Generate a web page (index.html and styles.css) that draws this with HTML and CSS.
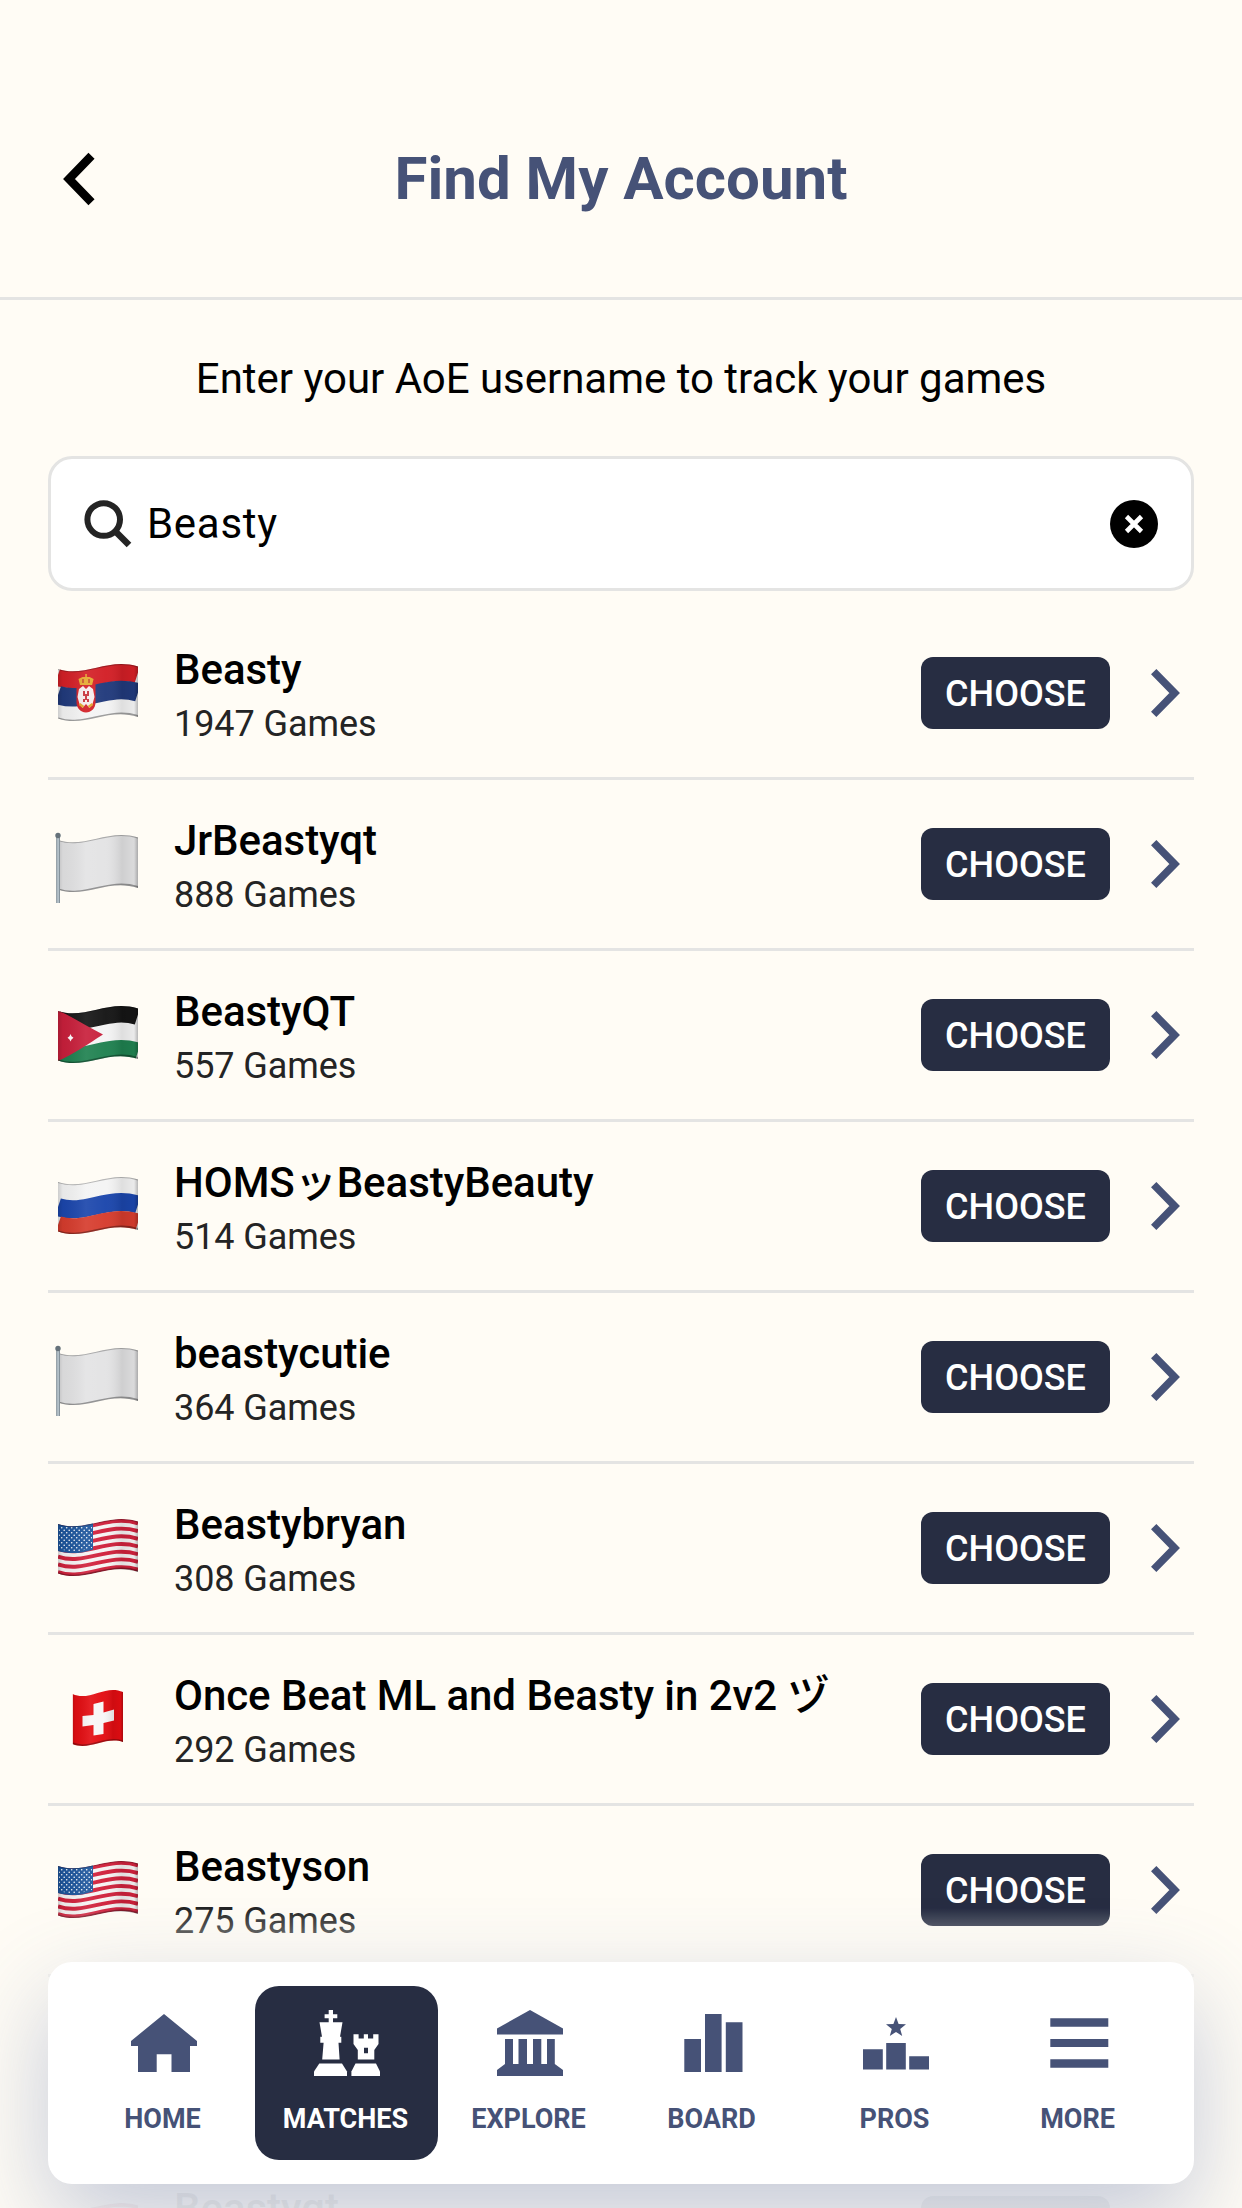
FILE: index.html
```html
<!DOCTYPE html>
<html lang="en">
<head>
  <meta charset="UTF-8" />
  <meta name="viewport" content="width=device-width, initial-scale=1.0"/>
  <title>Find My Account</title>
  <link rel="stylesheet" href="styles.css">
</head>
<body>

  <!-- Shared icons and flags -->
  <svg class="sprite" width="0" height="0">
    <defs>
      <path id="wave" d="M0 5 C27 14 50 -7 80 2.5" fill="none" />
      <clipPath id="flag-clip">
        <path d="M0 5 C27 14 50 -7 80 2.5 V53 C50 43 27 64 0 54.5 Z" />
      </clipPath>
      <clipPath id="swiss-clip">
        <path d="M0 4 C17 12 33 -6 50.5 2 V52 C33 46 17 61 0 54 Z" />
      </clipPath>
      <linearGradient id="folds">
        <stop offset="0" stop-color="#000" stop-opacity="0.16" />
        <stop offset="0.06" stop-color="#000" stop-opacity="0.05" />
        <stop offset="0.35" stop-color="#fff" stop-opacity="0.08" />
        <stop offset="0.6" stop-color="#fff" stop-opacity="0.03" />
        <stop offset="0.8" stop-color="#000" stop-opacity="0.09" />
        <stop offset="0.95" stop-color="#000" stop-opacity="0.04" />
        <stop offset="1" stop-color="#000" stop-opacity="0.25" />
      </linearGradient>
      <linearGradient id="pole">
        <stop offset="0" stop-color="#72808a" />
        <stop offset="0.5" stop-color="#c5d2da" />
        <stop offset="1" stop-color="#6d7a84" />
      </linearGradient>
      <pattern id="stars" width="5" height="5" patternUnits="userSpaceOnUse">
        <circle cx="1.2" cy="1.2" r="0.8" fill="#fff" />
        <circle cx="3.7" cy="3.7" r="0.8" fill="#fff" />
      </pattern>

      <g id="shade">
        <rect width="80" height="60" fill="url(#folds)" />
        <use href="#wave" stroke="#000" stroke-opacity="0.25" stroke-width="2" />
        <use href="#wave" y="50" stroke="#000" stroke-opacity="0.35" stroke-width="3" />
      </g>

      <symbol id="flag-rs" viewBox="0 0 100 80">
        <g transform="translate(10 11)" clip-path="url(#flag-clip)">
          <rect width="80" height="60" fill="#f4f4f4" />
          <use href="#wave" y="6" stroke="#d31f26" stroke-width="22" />
          <use href="#wave" y="26" stroke="#213a7c" stroke-width="18.5" />
          <path d="M18.5 20 H37.5 V38 C37.5 45 33 48 28 48.5 C22 48 18.5 44 18.5 38 Z" fill="#d31f26" />
          <path d="M28 25 l-3-3 -4 3 -1.5 8 2 7 3 4 3.5-4 3.5 4 3-4 2-7 -1.5-8 -4-3 Z" fill="#f6ecec" />
          <path d="M25 27 h2 v3 h2 v-3 h2 v5 h-2 v3 h2 v3 h-2 v-2 h-2 v2 h-2 v-3 h2 v-3 h-2 Z" fill="#c8323a" />
          <path d="M21.5 40 l4 3 M34.5 40 l-4 3" stroke="#e0a52c" stroke-width="2.5" />
          <path d="M22 21 l-1.5-6 4-2 2.8 0 v-3 h1.5 v3 l2.8 0 4 2 -1.5 6 Z" fill="#e5a92f" />
          <path d="M25 15 v4 M31 15 v4" stroke="#c33a28" stroke-width="1.4" />
          <use href="#shade" />
        </g>
      </symbol>

      <symbol id="flag-none" viewBox="0 0 100 80">
        <g transform="translate(10 11)" clip-path="url(#flag-clip)">
          <rect width="80" height="60" fill="#e3e3e4" />
          <use href="#shade" />
        </g>
        <rect x="8.2" y="11" width="3.8" height="68" fill="url(#pole)" />
        <circle cx="10" cy="11.5" r="2.7" fill="#65717a" />
      </symbol>

      <symbol id="flag-jo" viewBox="0 0 100 80">
        <g transform="translate(10 11)" clip-path="url(#flag-clip)">
          <rect width="80" height="60" fill="#f4f4f4" />
          <use href="#wave" y="6" stroke="#151515" stroke-width="21" />
          <use href="#wave" y="43" stroke="#1f8150" stroke-width="18" />
          <path d="M0 4 C16 12 30 21 45 28.5 C30 38 16 48 0 55 Z" fill="#c81f3b" />
          <path d="M12.5 28 l1 2.2 2 1.6 -2 1.6 -1 2.2 -1-2.2 -2-1.6 2-1.6 Z" fill="#fff" />
          <use href="#shade" />
        </g>
      </symbol>

      <symbol id="flag-ru" viewBox="0 0 100 80">
        <g transform="translate(10 11)" clip-path="url(#flag-clip)">
          <rect width="80" height="60" fill="#f4f4f4" />
          <use href="#wave" y="25" stroke="#1b46ac" stroke-width="18" />
          <use href="#wave" y="43" stroke="#d63c2d" stroke-width="18" />
          <use href="#shade" />
        </g>
      </symbol>

      <symbol id="flag-us" viewBox="0 0 100 80">
        <g transform="translate(10 11)" clip-path="url(#flag-clip)">
          <rect width="80" height="60" fill="#f6f3f3" />
          <g stroke="#d0213c" stroke-width="3.9">
            <use href="#wave" y="1.9" />
            <use href="#wave" y="9.6" />
            <use href="#wave" y="17.3" />
            <use href="#wave" y="25" />
            <use href="#wave" y="32.7" />
            <use href="#wave" y="40.4" />
            <use href="#wave" y="48.1" />
          </g>
          <path d="M0 3 H35 V30.5 C23 35 11 35 0 32 Z" fill="#1d559c" />
          <path d="M1 8 H34 V29 C23 33 11 33 1 30 Z" fill="url(#stars)" />
          <use href="#shade" />
        </g>
      </symbol>

      <symbol id="flag-ch" viewBox="0 0 100 80">
        <g transform="translate(24.5 11)" clip-path="url(#swiss-clip)">
          <rect width="51" height="60" fill="#e30d12" />
          <path d="M21 14 L31 11.5 V22.5 L41.5 19.5 V30.5 L31 33 V44 L21 45.5 V35 L10 36.5 V26 L21 25 Z" fill="#f8f6f6" />
          <rect width="50.5" height="60" fill="url(#folds)" />
          <path d="M0 54 C17 61 33 46 50.5 52" fill="none" stroke="#000" stroke-opacity="0.3" stroke-width="3" />
        </g>
      </symbol>

      <symbol id="chevron" viewBox="0 0 30 48">
        <path d="M2.7 2.7 L23.7 24 L2.7 45.3" fill="none" stroke="currentColor" stroke-width="7.5" />
      </symbol>
    </defs>
  </svg>

  <header class="header">
    <a class="back" href="#">
      <svg width="34" height="54" viewBox="0 0 34 54" fill="none" stroke="#000" stroke-width="8.5">
        <path d="M29.5 3.8 L7 27 L29.5 50.2" />
      </svg>
    </a>
    <h1 class="title">Find My Account</h1>
  </header>

  <main class="content">
    <p class="intro">Enter your AoE username to track your games</p>

    <div class="search">
      <svg class="search-icon" width="48" height="48" viewBox="0 0 48 48" fill="none" stroke="#242424">
        <circle cx="19.7" cy="19.5" r="16.3" stroke-width="6" />
        <path d="M31 31 L45 45" stroke-width="6.5" />
      </svg>
      <input class="search-input" type="text" value="Beasty" />
      <svg class="clear" width="48" height="48" viewBox="0 0 48 48">
        <circle cx="24" cy="24" r="24" fill="#000" />
        <path d="M16.5 16.5 L31.5 31.5 M31.5 16.5 L16.5 31.5" stroke="#fff" stroke-width="4.6" />
      </svg>
    </div>

    <ul class="players">
      <li class="player">
        <svg class="flag"><use href="#flag-rs" /></svg>
        <div class="info"><div class="name">Beasty</div><div class="games">1947 Games</div></div>
        <button class="choose">CHOOSE</button>
        <svg class="chevron"><use href="#chevron" /></svg>
      </li>
      <li class="player">
        <svg class="flag"><use href="#flag-none" /></svg>
        <div class="info"><div class="name">JrBeastyqt</div><div class="games">888 Games</div></div>
        <button class="choose">CHOOSE</button>
        <svg class="chevron"><use href="#chevron" /></svg>
      </li>
      <li class="player">
        <svg class="flag"><use href="#flag-jo" /></svg>
        <div class="info"><div class="name">BeastyQT</div><div class="games">557 Games</div></div>
        <button class="choose">CHOOSE</button>
        <svg class="chevron"><use href="#chevron" /></svg>
      </li>
      <li class="player">
        <svg class="flag"><use href="#flag-ru" /></svg>
        <div class="info"><div class="name">HOMSッBeastyBeauty</div><div class="games">514 Games</div></div>
        <button class="choose">CHOOSE</button>
        <svg class="chevron"><use href="#chevron" /></svg>
      </li>
      <li class="player">
        <svg class="flag"><use href="#flag-none" /></svg>
        <div class="info"><div class="name">beastycutie</div><div class="games">364 Games</div></div>
        <button class="choose">CHOOSE</button>
        <svg class="chevron"><use href="#chevron" /></svg>
      </li>
      <li class="player">
        <svg class="flag"><use href="#flag-us" /></svg>
        <div class="info"><div class="name">Beastybryan</div><div class="games">308 Games</div></div>
        <button class="choose">CHOOSE</button>
        <svg class="chevron"><use href="#chevron" /></svg>
      </li>
      <li class="player">
        <svg class="flag"><use href="#flag-ch" /></svg>
        <div class="info"><div class="name">Once Beat ML and Beasty in 2v2 ヅ</div><div class="games">292 Games</div></div>
        <button class="choose">CHOOSE</button>
        <svg class="chevron"><use href="#chevron" /></svg>
      </li>
      <li class="player">
        <svg class="flag"><use href="#flag-us" /></svg>
        <div class="info"><div class="name">Beastyson</div><div class="games">275 Games</div></div>
        <button class="choose">CHOOSE</button>
        <svg class="chevron"><use href="#chevron" /></svg>
      </li>
      <li class="player"></li>
      <li class="player">
        <svg class="flag"><use href="#flag-us" /></svg>
        <div class="info"><div class="name">Beastyqt</div></div>
        <button class="choose"></button>
        <svg class="chevron"><use href="#chevron" /></svg>
      </li>
    </ul>
  </main>

  <div class="fade"></div>

  <nav class="tabs">
    <a class="tab" href="#">
      <svg class="tab-icon" viewBox="0 0 66 66">
        <path d="M33 4 L66 31 V36 H59 V62 H40.5 V44.3 H25.7 V62 H7 V36 H0 V31 Z" />
      </svg>
      <span>HOME</span>
    </a>
    <a class="tab active" href="#">
      <svg class="tab-icon" viewBox="0 0 66 66" fill-rule="evenodd">
        <!-- king -->
        <path d="M14.7 0 H19 V4.3 H23.3 V8.2 H19 V12.3 H28.5 L26 26.8 H27.3 V32.7 H24.5 L25.6 49.5 H8.2 L9.6 32.7 H6.3 V26.8 H8 L5.5 12.3 H14.7 V8.2 H10.6 V4.3 H14.7 Z" />
        <path d="M5.3 53.5 H28 L33 61.5 V66 H0 V61.5 Z" />
        <!-- rook -->
        <path d="M39.5 24.3 H44.6 V28.6 H49.8 V24.3 H54 V28.6 H59.2 V24.3 H64.5 V34 L60.3 40 V49.5 H43.8 V40 L39.5 34 Z M50 37.7 V43.3 H54 V37.7 Z" />
        <path d="M41.5 53.5 H62 L66 61.5 V66 H37.4 V61.5 Z" />
      </svg>
      <span>MATCHES</span>
    </a>
    <a class="tab" href="#">
      <svg class="tab-icon" viewBox="0 0 66 66">
        <path d="M33 0 L66 18.5 V24.5 H0 V18.5 Z" />
        <path d="M8 29 H16 V54 H21.5 V29 H30 V54 H36 V29 H44.3 V54 H50 V29 H57.8 V54 L66 60 V66 H0 V60 L8 54 Z" />
      </svg>
      <span>EXPLORE</span>
    </a>
    <a class="tab" href="#">
      <svg class="tab-icon" viewBox="0 0 66 66">
        <path d="M4.3 29 H21 V62 H4.3 Z M25 4 H41.6 V62 H25 Z M45.8 12.3 H62.5 V62 H45.8 Z" />
      </svg>
      <span>BOARD</span>
    </a>
    <a class="tab" href="#">
      <svg class="tab-icon" viewBox="0 0 66 66">
        <path d="M0 39.3 H19.8 V59.4 H0 Z M23.2 33 H42.8 V59.4 H23.2 Z M46.2 46.3 H66 V59.4 H46.2 Z" />
        <path d="M33 7 L35.6 14 L43 14.3 L37.2 18.9 L39.2 26 L33 21.9 L26.8 26 L28.8 18.9 L23 14.3 L30.4 14 Z" />
      </svg>
      <span>PROS</span>
    </a>
    <a class="tab" href="#">
      <svg class="tab-icon" viewBox="0 0 66 66">
        <path d="M4.3 8.3 H62.3 V16.7 H4.3 Z M4.3 29 H62.3 V37.1 H4.3 Z M4.3 49.3 H62.3 V57.8 H4.3 Z" />
      </svg>
      <span>MORE</span>
    </a>
  </nav>

</body>
</html>
```
FILE: styles.css
```css
:root {
  --bg: #fffcf5;
  --navy: #272d42;
  --blue: #465277;
  --line: #e4e4e3;
}

* {
  box-sizing: border-box;
}

body {
  margin: 0;
  height: 2208px;
  overflow: hidden;
  font-family: Roboto, 'Noto Sans CJK JP', sans-serif;
  background: var(--bg);
  color: #000;
}

.sprite {
  position: absolute;
}

.header {
  height: 300px;
  padding: 60px 62px 0;
  border-bottom: 3px solid var(--line);
  display: grid;
  grid-template-columns: 1fr auto 1fr;
  align-items: center;
}

.back svg {
  display: block;
}

.title {
  margin: 0;
  font-size: 60px;
  font-weight: 700;
  line-height: 70px;
  color: var(--blue);
}

.content {
  padding: 0 48px;
}

.intro {
  margin: 0;
  padding: 54px 0 52px;
  font-size: 42px;
  line-height: 50px;
  letter-spacing: -0.02px;
  text-align: center;
}

.search {
  height: 135px;
  padding: 0 33px;
  border: 3px solid var(--line);
  border-radius: 24px;
  background: #fff;
  display: flex;
  align-items: center;
}

.search-input {
  flex: 1;
  margin-left: 15px;
  padding: 0;
  border: none;
  outline: none;
  background: transparent;
  font: 42px Roboto, sans-serif;
  letter-spacing: 0.7px;
  color: #000;
}

.players {
  list-style: none;
  margin: 18px 0 0;
  padding: 0;
}

.player {
  height: 171px;
  padding-right: 13px;
  border-bottom: 3px solid var(--line);
  display: flex;
  align-items: center;
}

.flag {
  width: 100px;
  height: 80px;
  margin-right: 26px;
}

.info {
  flex: 1;
  height: 108px;
}

.name {
  font-size: 42px;
  font-weight: 500;
  line-height: 62px;
  letter-spacing: -0.05px;
}

.games {
  font-size: 36px;
  line-height: 46px;
  letter-spacing: -0.08px;
  color: #242424;
}

.choose {
  width: 189px;
  height: 72px;
  padding: 2px 0 0;
  border: none;
  border-radius: 12px;
  background: var(--navy);
  color: #fff;
  font: 500 36px Roboto, sans-serif;
}

.chevron {
  width: 30px;
  height: 48px;
  margin-left: 41px;
  color: var(--blue);
}

/* list fades out behind the tab bar */
.fade {
  position: absolute;
  left: 0;
  right: 0;
  bottom: 0;
  height: 300px;
  background: linear-gradient(rgba(255, 252, 245, 0), rgba(255, 252, 245, 0.5) 15%, rgba(255, 252, 245, 0.95) 35%);
}

.tabs {
  position: absolute;
  left: 48px;
  right: 48px;
  bottom: 24px;
  height: 222px;
  padding: 24px;
  border-radius: 24px;
  background: #fff;
  box-shadow: 0 36px 96px rgba(70, 95, 155, 0.32);
  display: flex;
}

.tab {
  flex: 1;
  padding-top: 24px;
  border-radius: 24px;
  display: flex;
  flex-direction: column;
  align-items: center;
  gap: 25px;
  color: var(--blue);
  font-size: 27px;
  font-weight: 700;
  line-height: 36px;
  text-decoration: none;
}

.tab span {
  padding-right: 2px;
}

.tab-icon {
  width: 66px;
  height: 66px;
  fill: currentColor;
}

.tab.active {
  background: var(--navy);
  color: #fff;
}
```
